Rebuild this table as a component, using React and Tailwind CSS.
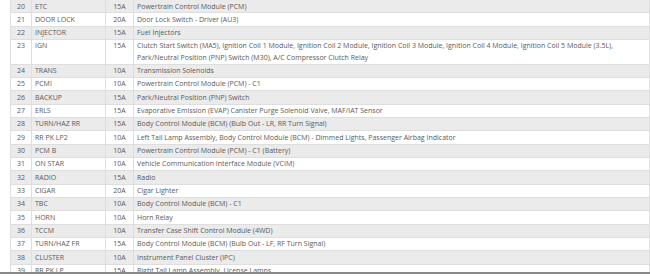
import React from "react";

const rows = [
  ["20", "ETC", "15A", "Powertrain Control Module (PCM)"],
  ["21", "DOOR LOCK", "20A", "Door Lock Switch - Driver (AU3)"],
  ["22", "INJECTOR", "15A", "Fuel Injectors"],
  ["23", "IGN", "15A", "Clutch Start Switch (MA5), Ignition Coil 1 Module, Ignition Coil 2 Module, Ignition Coil 3 Module, Ignition Coil 4 Module, Ignition Coil 5 Module (3.5L),|Park/Neutral Position (PNP) Switch (M30), A/C Compressor Clutch Relay"],
  ["24", "TRANS", "10A", "Transmission Solenoids"],
  ["25", "PCMI", "10A", "Powertrain Control Module (PCM) - C1"],
  ["26", "BACKUP", "15A", "Park/Neutral Position (PNP) Switch"],
  ["27", "ERLS", "15A", "Evaporative Emission (EVAP) Canister Purge Solenoid Valve, MAF/IAT Sensor"],
  ["28", "TURN/HAZ RR", "15A", "Body Control Module (BCM) (Bulb Out - LR, RR Turn Signal)"],
  ["29", "RR PK LP2", "10A", "Left Tail Lamp Assembly, Body Control Module (BCM) - Dimmed Lights, Passenger Airbag Indicator"],
  ["30", "PCM B", "10A", "Powertrain Control Module (PCM) - C1 (Battery)"],
  ["31", "ON STAR", "10A", "Vehicle Communication Interface Module (VCIM)"],
  ["32", "RADIO", "15A", "Radio"],
  ["33", "CIGAR", "20A", "Cigar Lighter"],
  ["34", "TBC", "10A", "Body Control Module (BCM) - C1"],
  ["35", "HORN", "10A", "Horn Relay"],
  ["36", "TCCM", "10A", "Transfer Case Shift Control Module (4WD)"],
  ["37", "TURN/HAZ FR", "15A", "Body Control Module (BCM) (Bulb Out - LF, RF Turn Signal)"],
  ["38", "CLUSTER", "10A", "Instrument Panel Cluster (IPC)"],
  ["39", "RR PK LP", "15A", "Right Tail Lamp Assembly, License Lamps"],
];

function App() {
  return (
    <div className="w-[650px] h-[276px] bg-white overflow-hidden" style={{ fontFamily: '"Open Sans", "Noto Sans", sans-serif' }}>
      <div className="h-[274px] overflow-hidden border-b-2 border-[#8a8a8a] pl-[10px]">
        <table className="mt-[-1px] w-[640px] border-collapse table-fixed text-[7px] leading-[11.33px] text-[#5a5a5a]">
          <colgroup>
            <col className="w-[21px]" />
            <col className="w-[74px]" />
            <col className="w-[28px]" />
            <col />
          </colgroup>
          <tbody>
            {rows.map((r, i) => (
              <tr key={r[0]} className={i % 2 === 0 ? "bg-[#ebebeb]" : "bg-white"}>
                <td className="border border-[#dedede] py-[0.5px] text-center align-top">{r[0]}</td>
                <td className="border border-[#dedede] py-[0.5px] pl-[3px] align-top whitespace-nowrap">{r[1]}</td>
                <td className="border border-[#dedede] py-[0.5px] text-center align-top">{r[2]}</td>
                <td className="border border-[#dedede] py-[0.5px] pl-[3px] align-top whitespace-nowrap">
                  {r[3].split("|").map((line, j) => (
                    <div key={j}>{line}</div>
                  ))}
                </td>
              </tr>
            ))}
          </tbody>
        </table>
      </div>
    </div>
  );
}

export default App;
